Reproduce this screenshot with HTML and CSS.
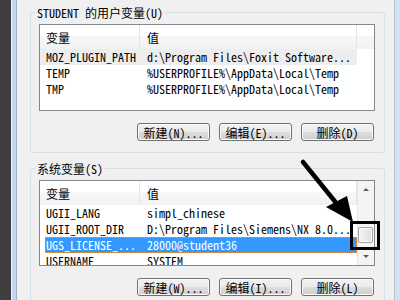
FILE: index.html
```html
<!DOCTYPE html>
<html lang="zh-CN">
<head>
    <meta charset="UTF-8">
    <title>环境变量</title>
    <link rel="stylesheet" href="styles.css">
</head>
<body>

<div class="screen">
    <div class="desk"></div>
    <div class="frame left"></div>

    <div class="dialog">
        <fieldset class="group">
            <legend>STUDENT <span class="zh">的用户变量</span>(U)</legend>
            <div class="list">
                <div class="head">
                    <div class="col name"><span class="zh">变量</span></div>
                    <div class="col value"><span class="zh">值</span></div>
                    <div class="col filler"></div>
                </div>
                <div class="row hot"><div class="name">MOZ_PLUGIN_PATH</div><div class="value">d:\Program Files\Foxit Software...</div></div>
                <div class="row"><div class="name">TEMP</div><div class="value">%USERPROFILE%\AppData\Local\Temp</div></div>
                <div class="row"><div class="name">TMP</div><div class="value">%USERPROFILE%\AppData\Local\Temp</div></div>
            </div>
            <div class="buttons">
                <button class="btn"><span class="zh">新建</span>(N)...</button>
                <button class="btn"><span class="zh">编辑</span>(E)...</button>
                <button class="btn"><span class="zh">删除</span>(D)</button>
            </div>
        </fieldset>

        <fieldset class="group">
            <legend><span class="zh">系统变量</span>(S)</legend>
            <div class="list scrolling">
                <div class="items">
                    <div class="head">
                        <div class="col name"><span class="zh">变量</span></div>
                        <div class="col value"><span class="zh">值</span></div>
                    </div>
                    <div class="row"><div class="name">UGII_LANG</div><div class="value">simpl_chinese</div></div>
                    <div class="row"><div class="name">UGII_ROOT_DIR</div><div class="value">D:\Program Files\Siemens\NX 8.0...</div></div>
                    <div class="row selected"><div class="name">UGS_LICENSE_...</div><div class="value">28000@student36</div></div>
                    <div class="row"><div class="name">USERNAME</div><div class="value">SYSTEM</div></div>
                </div>
                <div class="vscroll">
                    <div class="vbtn"><span class="tri up"></span></div>
                    <div class="track"><div class="thumb"></div></div>
                    <div class="vbtn"><span class="tri down"></span></div>
                </div>
            </div>
            <div class="buttons">
                <button class="btn"><span class="zh">新建</span>(W)...</button>
                <button class="btn"><span class="zh">编辑</span>(I)...</button>
                <button class="btn"><span class="zh">删除</span>(L)</button>
            </div>
        </fieldset>
    </div>

    <div class="frame right"></div>

    <!-- annotation drawn over the screenshot -->
    <div class="callout"></div>
    <svg class="pointer" width="400" height="300" viewBox="0 0 400 300">
        <line x1="303" y1="162" x2="337" y2="204" stroke="#000" stroke-width="4.5" stroke-linecap="round"/>
        <polygon points="353,222 326,207 347,196" fill="#000"/>
    </svg>
</div>

</body>
</html>
```

FILE: styles.css
```css
body {
    margin: 0;
    background: #f0f0f0;
    font-family: "Noto Sans Mono CJK SC", "Liberation Mono", monospace;
    font-size: 12px;
    color: #000;
}

.zh {
    font-family: "Noto Sans CJK SC", sans-serif;
    font-size: 12px;
}

.screen {
    position: relative;
    display: flex;
    width: 400px;
    height: 300px;
    overflow: hidden;
}

.desk {
    width: 11px;
    background: #3f3f3f;
}

.frame {
    width: 6px;
    box-sizing: border-box;
}

.frame.left {
    background: #c4d9f1;
    border-left: 1px solid #eef4fb;
    border-right: 1px solid #9fb0c4;
}

.frame.right {
    background: #d3e2f3;
    border-left: 1px solid #b7c3d1;
}

.dialog {
    flex: 1;
    background: #f0f0f0;
    padding: 5px 9px 0 13px;
    overflow: hidden;
}

.group {
    margin: 0;
    padding: 5px 9px 11px 8px;
    border: 1px solid #d5dfe5;
    border-radius: 3px;
    min-width: 0;
}

.group + .group {
    margin-top: 8px;
}

.group legend {
    display: flex;
    align-items: center;
    height: 14px;
    margin-left: -4px;
    padding: 0 2px;
    white-space: pre;
}

.list {
    height: 87px;
    box-sizing: border-box;
    border: 1px solid #828790;
    background: #fff;
    overflow: hidden;
}

.list.scrolling {
    height: 86px;
    display: flex;
}

.items {
    width: 317px;
}

.head {
    display: flex;
    height: 24px;
    background: linear-gradient(#ffffff 0%, #ffffff 45%, #f6f7f9 46%, #f1f2f4 100%);
}

.head .col {
    display: flex;
    align-items: center;
    box-sizing: border-box;
    border-right: 1px solid #e3e5e8;
}

.head .name {
    width: 100px;
    padding-left: 6px;
}

.head .value {
    width: 217px;
    padding-left: 7px;
}

.head .filler {
    flex: 1;
    border-right: none;
}

.row {
    display: flex;
    width: 317px;
    height: 16px;
    line-height: 16px;
    white-space: nowrap;
}

.row .name {
    width: 100px;
    padding-left: 6px;
    box-sizing: border-box;
}

.row .value {
    padding-left: 7px;
}

.row.hot {
    background: #ededed;
}

.row.selected {
    width: 312px;
    margin-left: 5px;
    box-sizing: border-box;
    border: 1px dotted #e0954a;
    line-height: 14px;
    background: #3399ff;
    color: #fff;
}

.row.selected .name {
    width: 95px;
    padding-left: 0;
}

.row.selected .value {
    padding-left: 6px;
}

.vscroll {
    width: 17px;
    box-sizing: border-box;
    display: flex;
    flex-direction: column;
    background: #f4f4f4;
    border-left: 1px solid #e6e6e6;
}

.vbtn {
    height: 17px;
    display: flex;
    align-items: center;
    justify-content: center;
}

.track {
    flex: 1;
}

.thumb {
    margin: 29px 1px 0 0;
    height: 16px;
    box-sizing: border-box;
    border: 1px solid #a3a3a3;
    border-radius: 2px;
    background: linear-gradient(to right, #f4f4f4, #dedede);
    box-shadow: inset 0 0 0 1px #fbfbfb;
}

.tri {
    width: 0;
    height: 0;
    border-left: 3px solid transparent;
    border-right: 3px solid transparent;
}

.tri.up {
    border-bottom: 3px solid #5c5c5c;
}

.tri.down {
    border-top: 3px solid #5c5c5c;
}

.buttons {
    display: flex;
    justify-content: flex-end;
    gap: 9px;
    margin-top: 12px;
    padding-right: 1px;
}

.btn {
    display: flex;
    align-items: center;
    justify-content: center;
    width: 73px;
    height: 18px;
    padding: 0;
    box-sizing: border-box;
    border: 1px solid #707070;
    border-radius: 3px;
    background: linear-gradient(#f2f2f2 0%, #ebebeb 50%, #dddddd 51%, #cfcfcf 100%);
    box-shadow: inset 0 0 0 1px #fbfbfb;
    font: inherit;
    color: #000;
    white-space: pre;
}

.callout {
    position: absolute;
    left: 350px;
    top: 221px;
    width: 30px;
    height: 29px;
    box-sizing: border-box;
    border: 3px solid #000;
}

.pointer {
    position: absolute;
    left: 0;
    top: 0;
    pointer-events: none;
}
```
